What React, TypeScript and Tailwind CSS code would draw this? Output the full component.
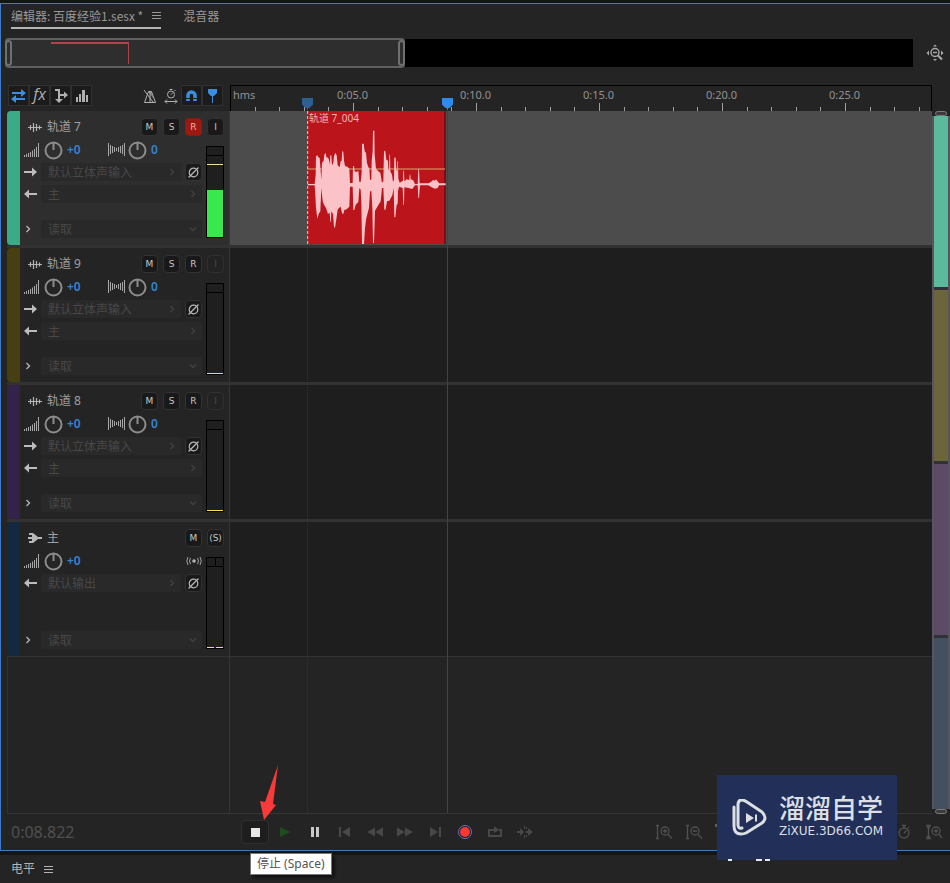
import type { ReactNode } from "react";
import clsx from "clsx";

type Track = {
  id: string;
  name: string;
  strip: string;
  active?: boolean;
  master?: boolean;
};

const tracks: Track[] = [
  { id: "t7", name: "轨道 7", strip: "bg-[#3aab86]", active: true },
  { id: "t9", name: "轨道 9", strip: "bg-[#463f12]" },
  { id: "t8", name: "轨道 8", strip: "bg-[#33224a]" },
  { id: "master", name: "主", strip: "bg-[#14283f]", master: true },
];

const rulerLabels = ["0:05.0", "0:10.0", "0:15.0", "0:20.0", "0:25.0"];

const MenuIcon = () => (
  <svg width="9" height="9" viewBox="0 0 9 9" stroke="currentColor" aria-hidden="true">
    <path d="M0 1.5h9M0 4.5h9M0 7.5h9" />
  </svg>
);

const WaveIcon = () => (
  <svg width="14" height="12" viewBox="0 0 14 12" stroke="#b4b4b4" fill="none" aria-hidden="true">
    <path d="M0 6.5h14M2.5 4v5M5.5 2v9M8.5 3v7M11.5 4.5v4" strokeWidth="1.200" />
  </svg>
);

const MasterIcon = () => (
  <svg width="14" height="12" viewBox="0 0 14 12" fill="#b8b8b8" aria-hidden="true">
    <path d="M1 1h4l5 4h4v2h-4l-5 4H1V9h3V7H0V5h4V3H1z" />
  </svg>
);

const VolumeIcon = () => (
  <svg width="16" height="16" viewBox="0 0 16 16" stroke="#a8a8a8" aria-hidden="true">
    <path d="M.5 13v2M2.5 12v3M4.5 11v4M6.5 10v5M8.5 8.500v6.500M10.500 7v8M12.500 5v10M14.500 1v14" />
  </svg>
);

const PanIcon = () => (
  <svg width="17" height="14" viewBox="0 0 17 14" stroke="#a8a8a8" aria-hidden="true">
    <path d="M.5 0v13M2.500 2v9M4.500 3v7M6.500 4v5M8.500 5v3M10.500 4v5M12.500 3v7M14.500 2v9M16.500 0v13" />
  </svg>
);

const Knob = ({ label }: { label: string }) => (
  <button aria-label={label}>
    <svg width="19" height="19" viewBox="0 0 19 19" fill="none" stroke="#8c8c8c" strokeWidth="2" aria-hidden="true">
      <circle cx="9.500" cy="9.500" r="8" />
      <path d="M9.500 2v7" />
    </svg>
  </button>
);

const ArrowIcon = ({ left }: { left?: boolean }) => (
  <svg width="13" height="10" viewBox="0 0 13 10" fill="#bcbcbc" aria-hidden="true">
    <path d={left ? "M0 5l5-4.500v3.500h8v2H5v3.500z" : "M13 5L8 .5V4H0v2h8v3.500z"} />
  </svg>
);

const Chevron = ({ down, className }: { down?: boolean; className?: string }) => (
  <svg
    width="8"
    height="8"
    viewBox="0 0 8 8"
    fill="none"
    stroke="currentColor"
    strokeWidth="1.300"
    className={className}
    aria-hidden="true"
  >
    <path d={down ? "M1 2.500l3 3 3-3" : "M2.500 1l3 3-3 3"} />
  </svg>
);

const SmallButton = ({ children, label, className }: { children: ReactNode; label: string; className?: string }) => (
  <button
    aria-label={label}
    className={clsx(
      "flex h-[18px] w-[17px] items-center justify-center rounded-sm border font-['DejaVu_Sans',sans-serif] text-[9px] leading-none",
      className ?? "border-[#323232] bg-[#191919] text-[#c8c8c8]",
    )}
  >
    {children}
  </button>
);

const PhaseButton = () => (
  <SmallButton label="反相">
    <svg width="13" height="13" viewBox="0 0 13 13" fill="none" stroke="#b8b8b8" strokeWidth="1.200" aria-hidden="true">
      <circle cx="6.500" cy="6.500" r="4.300" />
      <path d="M1.500 11.500l10-10" />
    </svg>
  </SmallButton>
);

const Field = ({ label, value, down }: { label: string; value: string; down?: boolean }) => (
  <label className="relative block h-[18px] flex-1 text-[#424242]">
    <select
      aria-label={label}
      className="block h-full w-full appearance-none rounded-xs bg-[#292929] pt-px pl-[7px] text-xs leading-[18px] text-[#484848]"
    >
      <option>{value}</option>
    </select>
    <Chevron down={down} className="pointer-events-none absolute top-[5px] right-[5px]" />
  </label>
);

const Meter = ({ active, master }: { active?: boolean; master?: boolean }) => (
  <div className="mt-[10px] flex h-[92px] w-[18px] flex-col border border-black bg-[#1f1f1f]">
    <div className="flex h-[9px] justify-center border-b border-black">
      {master && <div className="w-px bg-black" />}
    </div>
    {active ? (
      <>
        <div className="mt-2 h-px bg-[#f2e08a]" />
        <div className="mt-auto h-[47px] bg-[#38e84c]" />
      </>
    ) : (
      <div className="mt-auto flex gap-[2px]">
        <div className="h-px flex-1 bg-[#f8e048]" />
        {master && <div className="h-px flex-1 bg-[#f8e048]" />}
      </div>
    )}
  </div>
);

const TrackHeader = ({ track }: { track: Track }) => {
  const { name, strip, active, master } = track;

  return (
    <div className={clsx("flex h-[134px] w-[223px] shrink-0 border-r border-[#363636]", active ? "bg-[#2e2e2e]" : "bg-[#242424]")}>
      <div className={clsx("w-[13px] rounded-l-sm", strip)} />
      <div className="flex-1 pt-[7px] pr-[5px] pl-1">
        <div className="flex h-[18px] items-center">
          <div className="ml-1 w-[19px]">{master ? <MasterIcon /> : <WaveIcon />}</div>
          <span className="flex-1 text-xs leading-[18px] text-[#a0a0a0]">{name}</span>
          <div className="flex gap-[5px]">
            <SmallButton label="静音">M</SmallButton>
            {master ? (
              <SmallButton label="独奏">(S)</SmallButton>
            ) : (
              <>
                <SmallButton label="独奏">S</SmallButton>
                <SmallButton
                  label="录制准备"
                  className={active ? "border-[#8c1a12] bg-[#9a1a12] text-[#f0b0a8]" : undefined}
                >
                  R
                </SmallButton>
                <SmallButton
                  label="监视输入"
                  className={active ? undefined : "border-[#303030] bg-[#232323] text-[#484848]"}
                >
                  I
                </SmallButton>
              </>
            )}
          </div>
        </div>
        <div className="flex gap-1">
          <div className="flex-1">
            <div className="mt-1 flex h-5 items-center">
              <VolumeIcon />
              <div className="ml-1 flex w-[64px] items-center gap-1">
                <Knob label="音量" />
                <span className="text-xs font-semibold text-[#3583cf]">+0</span>
              </div>
              {master ? (
                <svg width="16" height="12" viewBox="0 0 16 12" fill="none" stroke="#a0a0a0" className="ml-auto" aria-hidden="true">
                  <circle cx="8" cy="6" r="1.800" fill="#b0b0b0" stroke="none" />
                  <path d="M4.500 3q-2 3 0 6M11.500 3q2 3 0 6M2 2q-2.500 4 0 8M14 2q2.500 4 0 8" />
                </svg>
              ) : (
                <>
                  <PanIcon />
                  <div className="ml-[3px] flex items-center gap-1">
                    <Knob label="立体声平衡" />
                    <span className="text-xs font-semibold text-[#3583cf]">0</span>
                  </div>
                </>
              )}
            </div>
            <div className="mt-[3px] flex items-center">
              <div className="w-[17px]">
                <ArrowIcon left={master} />
              </div>
              <Field label={master ? "输出" : "输入"} value={master ? "默认输出" : "默认立体声输入"} />
              <div className="ml-1">
                <PhaseButton />
              </div>
            </div>
            <div className="mt-1 flex h-[18px] items-center">
              {!master && (
                <>
                  <div className="w-[17px]">
                    <ArrowIcon left />
                  </div>
                  <Field label="输出" value="主" />
                </>
              )}
            </div>
            <div className="mt-[17px] flex items-center">
              <button aria-label="展开" className="w-[17px] text-[#b8b8b8]">
                <Chevron />
              </button>
              <Field label="自动化模式" value="读取" down />
            </div>
          </div>
          <Meter active={active} master={master} />
        </div>
      </div>
    </div>
  );
};

const Clip = () => (
  <div className="relative ml-[77px] h-[133px] w-[139px] border-r-2 border-[#7c0d12] bg-[#bb141b]">
    <span className="absolute top-0 left-[2px] text-[10px] leading-[14px] text-[#f0b4b4]">轨道 7_004</span>
    <svg width="139" height="133" viewBox="36 9 417 399" aria-hidden="true">
      <path d="M36 183H450" stroke="#cf7650" strokeWidth="5" />
      <path
        fill="#fbc3c8"
        d="M38 228H59L62 200 63 145 67 142 70 148 74 150 77 190 79 215 81 165 86 158 88 140 92 134 95 150 99 148 103 160 105 170 106 142 109 142 111 172 115 165 117 145 121 134 125 142 128 172 134 178 137 160 140 158 142 128 145 132 147 158 150 174 157 176 163 182 165 225 173 225 174 174 177 174 179 190 185 192 190 188 193 222 197 222 200 195 201 107 206 107 209 130 213 135 216 165 220 178 223 180 225 215 229 215 230 158 233 130 234 68 238 68 239 140 243 182 250 190 256 194 261 224 265 220 267 128 271 130 274 155 279 158 280 186 282 186 283 140 285 140 286 190 291 200 294 222 297 215 298 148 302 150 304 185 307 190 307 160 309 160 310 212 314 224 324 218 325 188 327 188 328 220 335 214 343 216 344 200 346 200 347 214 354 216 360 228H368L370 183 372 183 374 226H400L408 222 414 216 420 218 423 214 428 220 432 226H452V232H432L428 240 420 242 410 238 400 232H375L372 270 370 270 368 232H360L352 243 340 240 328 238 327 290 325 290 323 240 312 236 309 250 308 288 305 290 301 328 298 328 296 240 292 262 283 278 276 280 272 304 268 306 265 240 261 240 257 280 247 296 240 308 237 404 234 406 232 300 229 250 225 250 222 300 214 330 210 360 207 408 201 408 199 280 197 245 193 240 190 282 182 290 178 306 175 306 173 236 165 236 163 296 155 304 148 306 145 318 141 316 137 296 132 300 128 305 124 334 120 360 117 356 114 318 109 310 108 342 106 340 104 314 99 318 93 300 87 290 83 280 79 240 76 310 71 318 67 332 63 300 61 260 59 232H38z"
      />
      <path d="M38 9V408" stroke="#f0c4c4" strokeWidth="3" strokeDasharray="9 6" />
    </svg>
  </div>
);

const Marker = ({ className }: { className: string }) => (
  <svg width="11" height="12" viewBox="0 0 11 12" className={className} aria-hidden="true">
    <path fill="currentColor" d="M0 0h11v6.500L7.500 10H6v2H5v-2H3.500L0 6.500z" />
  </svg>
);

const Ruler = () => (
  <div className="relative h-[26px] flex-1 overflow-hidden border-t border-r border-l border-black bg-[#242424] text-[11px] leading-[18px] text-[#929292]">
    <div className="flex">
      <span className="w-[60px] shrink-0 pl-[2px]">hms</span>
      {rulerLabels.map((label) => (
        <span key={label} className="w-[123px] shrink-0 text-center">
          {label}
        </span>
      ))}
    </div>
    <svg className="absolute bottom-0 -left-px h-2 w-full" stroke="#a0a0a0" aria-hidden="true">
      {Array.from({ length: 60 }, (_, i) => {
        const x = Math.round(i * 24.6) + 0.5;
        return <line key={i} x1={x} x2={x} y1={i % 5 === 0 ? 0 : 4} y2="8" />;
      })}
    </svg>
    <Marker className="absolute bottom-px left-[71px] text-[#2d5f91]" />
    <Marker className="absolute bottom-px left-[211px] text-[#2d8ceb]" />
  </div>
);

const ToolButton = ({ label, on, boxed, children }: { label: string; on?: boolean; boxed?: boolean; children: ReactNode }) => (
  <button
    aria-label={label}
    className={clsx(
      "flex size-[21px] items-center justify-center border",
      boxed ? "border-[#303030] bg-[#1b1b1b]" : "border-transparent",
      on ? "text-[#3a8de0]" : "text-[#b0b0b0]",
    )}
  >
    {children}
  </button>
);

const Toolbar = () => (
  <div className="flex h-[26px] w-[223px] shrink-0 items-start justify-between pr-[7px] pl-px">
    <div className="flex">
      <ToolButton label="输入/输出" on boxed>
        <svg width="15" height="14" viewBox="0 0 15 14" fill="currentColor" aria-hidden="true">
          <path d="M1 3h9V0l5 4-5 4V5H1zM14 9H5V6L0 10l5 4v-3h9z" />
        </svg>
      </ToolButton>
      <ToolButton label="效果" boxed>
        <span className="pb-[3px] font-['Open_Sans',sans-serif] text-base leading-none italic">fx</span>
      </ToolButton>
      <ToolButton label="发送" boxed>
        <svg width="14" height="14" viewBox="0 0 14 14" fill="currentColor" aria-hidden="true">
          <path d="M4 0h2v5h4V2.500L14 6l-4 3.500V7H6v3h3l-4 4-4-4h3V2H1V0z" />
        </svg>
      </ToolButton>
      <ToolButton label="均衡" boxed>
        <svg width="12" height="12" viewBox="0 0 12 12" fill="currentColor" aria-hidden="true">
          <path d="M0 7h2v5H0zM3 4h2v8H3zM6 0h3v12H6zM10 5h2v7h-2z" />
        </svg>
      </ToolButton>
    </div>
    <div className="flex">
      <ToolButton label="节拍器">
        <svg width="14" height="14" viewBox="0 0 14 14" fill="none" stroke="currentColor" aria-hidden="true">
          <path d="M1.500 13.500L5.500 2.500h3l4 11zM1 1l9 12M7 3v10" />
          <path d="M5.500 3h3l2 7z" fill="currentColor" stroke="none" opacity=".6" />
        </svg>
      </ToolButton>
      <ToolButton label="时间伸缩">
        <svg width="14" height="16" viewBox="0 0 14 16" fill="none" stroke="currentColor" aria-hidden="true">
          <circle cx="7" cy="6.500" r="3.500" />
          <path d="M7 6.500l2-2M5.500 1.500h3M10.500 3l1-1M1 13.500h12M3 11.500l-2 2 2 2M11 11.500l2 2-2 2" />
        </svg>
      </ToolButton>
      <ToolButton label="对齐" on boxed>
        <svg width="13" height="13" viewBox="0 0 13 13" aria-hidden="true">
          <path d="M3 12V6.500a3.500 3.500 0 017 0V12" fill="none" stroke="currentColor" strokeWidth="3.600" />
          <path d="M0 9.500h13" stroke="#1b1b1b" />
        </svg>
      </ToolButton>
      <ToolButton label="播放指示器" on boxed>
        <svg width="9" height="14" viewBox="0 0 9 14" fill="currentColor" aria-hidden="true">
          <path d="M0 0h9v4L6 7H5v7H4V7H3L0 4z" />
        </svg>
      </ToolButton>
    </div>
  </div>
);

const TransportButton = ({ label, children }: { label: string; children: ReactNode }) => (
  <button aria-label={label} className="flex h-6 w-7 items-center justify-center text-[#484848]">
    <svg width="18" height="14" viewBox="0 0 18 14" fill="currentColor" aria-hidden="true">
      {children}
    </svg>
  </button>
);

const Transport = () => (
  <div className="flex gap-[2px]">
    <div className="relative">
      <button
        aria-label="停止"
        className="flex h-6 w-7 items-center justify-center rounded-sm border border-[#2f2f2f] bg-[#1e1e1e]"
      >
        <span className="size-[9px] bg-[#e6e6e6]" />
      </button>
      <div
        role="tooltip"
        className="absolute top-[33px] left-[9px] z-20 h-[22px] border border-[#767676] bg-white px-[6px] text-xs leading-5 whitespace-nowrap text-[#555555] shadow-[3px_3px_3px_rgba(0,0,0,0.5)]"
      >
        停止 (Space)
      </div>
      <svg
        width="20"
        height="56"
        viewBox="0 0 20 56"
        className="pointer-events-none absolute bottom-6 left-[18px] z-10"
        aria-hidden="true"
      >
        <path fill="#f93a3a" d="M19 1L14 40l3 1L5 56 1 37l5 1z" />
      </svg>
    </div>
    <TransportButton label="播放">
      <path d="M4 2l10 5-10 5z" fill="#1f4d22" />
    </TransportButton>
    <TransportButton label="暂停">
      <path d="M5 2h3v10H5zM10 2h3v10h-3z" fill="#c8c8c8" />
    </TransportButton>
    <TransportButton label="移到上一个">
      <path d="M3 2h2v10H3zM14 2v10L6 7z" />
    </TransportButton>
    <TransportButton label="快退">
      <path d="M9 2.500v9L1 7zM17 2.500v9L9 7z" />
    </TransportButton>
    <TransportButton label="快进">
      <path d="M1 2.500v9L9 7zM9 2.500v9L17 7z" />
    </TransportButton>
    <TransportButton label="移到下一个">
      <path d="M4 2v10l8-5zM13 2h2v10h-2z" />
    </TransportButton>
    <TransportButton label="录制">
      <circle cx="9" cy="7" r="6.500" fill="#1c1c2c" stroke="#6a74c4" />
      <circle cx="9" cy="7" r="5" fill="#f9382f" />
    </TransportButton>
    <TransportButton label="循环播放">
      <path d="M2 4h6V1l5 4-5 3V6H4v4h10V6h-1V4h3v8H2z" />
    </TransportButton>
    <TransportButton label="跳过所选项目">
      <path d="M1 6h3V3l4 4-4 4V8H1zM12 6V3l5 4-5 4V8h-2V6zM8 1h1v3H8zM8 10h1v3H8zM10 2h1v2h-1zM10 10h1v2h-1z" />
    </TransportButton>
  </div>
);

const ZoomButton = ({ label, children }: { label: string; children: ReactNode }) => (
  <button aria-label={label} className="flex h-6 w-7 items-center justify-center text-[#505050]">
    <svg width="18" height="16" viewBox="0 0 18 16" fill="none" stroke="currentColor" strokeWidth="1.300" aria-hidden="true">
      {children}
    </svg>
  </button>
);

const ZoomTools = () => (
  <div className="flex gap-[2px]">
    <ZoomButton label="放大振幅">
      <path d="M2.500 1v14M1 1.500h3M1 14.500h3M13 10.500l4 4M8 7h4M10 5v4" />
      <circle cx="10" cy="7" r="4" />
    </ZoomButton>
    <ZoomButton label="缩小振幅">
      <path d="M2.500 1v14M1 1.500h3M1 14.500h3M13 10.500l4 4M8 7h4" />
      <circle cx="10" cy="7" r="4" />
    </ZoomButton>
    <div className="w-[178px]">
      <svg width="8" height="24" viewBox="0 0 8 24" fill="#606060" aria-hidden="true">
        <path d="M5 4h3v3H5z" />
      </svg>
    </div>
    <ZoomButton label="缩放时间">
      <circle cx="9" cy="9" r="5" />
      <path d="M7 1.500h4M9 1.500V4M9 9l2.500-2.500M13 4l1-1" />
    </ZoomButton>
    <ZoomButton label="放大轨道">
      <path d="M1 1.500h5M1 14.500h5M3.500 2v12M2 4l1.500-2L5 4M2 12l1.500 2L5 12M14 10.500l3 3.500M9 7h4M11 5v4" />
      <circle cx="11" cy="7" r="4" />
    </ZoomButton>
  </div>
);

const Navigator = () => (
  <div className="ml-1 flex h-[30px] items-center">
    <div className="flex h-full w-[400px] items-center justify-between rounded-sm border-2 border-[#606060] bg-[#2e2e2e]">
      <div className="-ml-[2px] h-[26px] w-[7px] rounded-full border-2 border-[#707070]" />
      <svg width="80" height="26" viewBox="0 0 80 26" className="mr-auto ml-[39px]" aria-hidden="true">
        <path d="M0 3h78" stroke="#b0444a" strokeWidth="2" />
        <path d="M77.500 2v22" stroke="#b0444a" />
      </svg>
      <div className="-mr-[2px] h-[26px] w-[7px] rounded-full border-2 border-[#707070]" />
    </div>
    <div className="h-[28px] flex-1 bg-black" />
    <button aria-label="全部缩小" className="flex w-[37px] justify-center pl-[6px]">
      <svg width="18" height="18" viewBox="0 0 18 18" fill="none" stroke="#a8a8a8" strokeWidth="1.400" aria-hidden="true">
        <circle cx="9" cy="8.500" r="4" />
        <path d="M12 11.500l4 4" strokeWidth="2.200" />
        <path d="M7 8.500h4" />
        <path d="M7 2.500L9 .5l2 2zM7 15l2 2 2-2zM3 6.500L.5 9 3 11.500zM15 6.500L17.500 9 15 11.500z" fill="#a8a8a8" stroke="none" />
      </svg>
    </button>
  </div>
);

const Grip = () => <div className="mx-auto h-[5px] w-3 shrink-0 rounded-full border border-[#7c7c7c] bg-[#3c3c3c]" />;

const TrackScrollbar = () => (
  <div className="flex w-[18px] shrink-0 flex-col">
    <Grip />
    <div className="flex flex-1 flex-col gap-[3px] border-x-2 border-[#55575c] bg-[#332f36]">
      <div className="flex-1 bg-[#5cba9c]" />
      <div className="flex-1 bg-[#6c643a]" />
      <div className="flex-1 bg-[#5b4b67]" />
      <div className="flex-1 bg-[#43505f]" />
    </div>
    <Grip />
  </div>
);

const Watermark = () => (
  <div className="absolute right-[53px] -bottom-[10px] z-10 flex h-[85px] w-[180px] items-center bg-[#223059] pl-[14px] text-[#dcdfe4]">
    <svg width="36" height="38" viewBox="0 0 36 38" fill="none" stroke="currentColor" strokeWidth="3" strokeLinejoin="round" strokeLinecap="round" aria-hidden="true">
      <path d="M3 8v19q0 8 7 8 3 0 5-1l16-10q6-5 0-11L16 3q-3-2-5-2-4 0-4 5v20q0 4 4 3" />
      <path d="M15 14l8 5-8 5zM24 15.500h2v7h-2z" fill="currentColor" stroke="none" />
    </svg>
    <div className="ml-3 pb-[6px]">
      <div className="font-['Noto_Sans_CJK_SC',sans-serif] text-[26px] leading-7 font-medium">溜溜自学</div>
      <div className="mt-1 font-['DejaVu_Sans',sans-serif] text-xs leading-3">ZiXUE.3D66.COM</div>
    </div>
    <svg width="50" height="3" viewBox="0 0 50 3" className="absolute top-[84px] left-[10px]" stroke="#e8e8e8" strokeWidth="2" aria-hidden="true">
      <path d="M1 1h4M29 1h6M38 1h5" />
    </svg>
  </div>
);

export default function App() {
  return (
    <div className="flex min-h-screen flex-col bg-[#151515] pt-[3px] font-['Noto_Sans','Noto_Sans_CJK_SC',sans-serif] text-xs">
      <main className="relative flex flex-1 flex-col border-t border-b border-l border-[#3f7cc8] bg-[#242424]">
        <div className="flex h-[34px] items-start pl-[10px] font-['Noto_Sans_CJK_SC',sans-serif] text-[#989898]">
          <button className="flex h-[25px] items-center gap-[9px] border-b-2 border-[#b4b4b4]">
            编辑器: 百度经验1.sesx *
            <MenuIcon />
          </button>
          <button className="ml-[22px] h-[25px] border-b-2 border-transparent">混音器</button>
        </div>

        <Navigator />

        <div className="mt-[17px] ml-[6px] flex">
          <Toolbar />
          <Ruler />
          <div className="w-[18px]" />
        </div>

        <div className="ml-[6px] flex flex-1">
          <div className="relative flex flex-1 flex-col border-b border-[#363636]">
            {tracks.map((track) => (
              <div key={track.id} className={clsx("flex border-[#323232]", track.master ? "border-b" : "border-b-3")}>
                <TrackHeader track={track} />
                <div className={clsx("flex-1", track.active ? "bg-[#4c4c4c]" : "bg-[#1e1e1e]")}>
                  {track.active && <Clip />}
                </div>
              </div>
            ))}
            <div className="w-[223px] flex-1 border-x border-[#363636] border-l-[#28333e]" />
            <div className="absolute top-[134px] bottom-0 left-[300px] border-l border-dotted border-[#6c1c1e]" />
            <div className="absolute top-0 bottom-0 left-[440px] w-px bg-[#b01418]" />
          </div>
          <TrackScrollbar />
        </div>

        <div className="flex h-9 items-center pr-[2px] pl-[10px]">
          <time className="w-[230px] text-base leading-none text-[#505050]">0:08.822</time>
          <Transport />
          <div className="ml-auto">
            <ZoomTools />
          </div>
        </div>

        <Watermark />
      </main>

      <footer className="mt-1 flex h-7 items-center gap-[9px] bg-[#242424] pl-[11px] text-[#b4b4b4]">
        <h2>电平</h2>
        <MenuIcon />
      </footer>
    </div>
  );
}
